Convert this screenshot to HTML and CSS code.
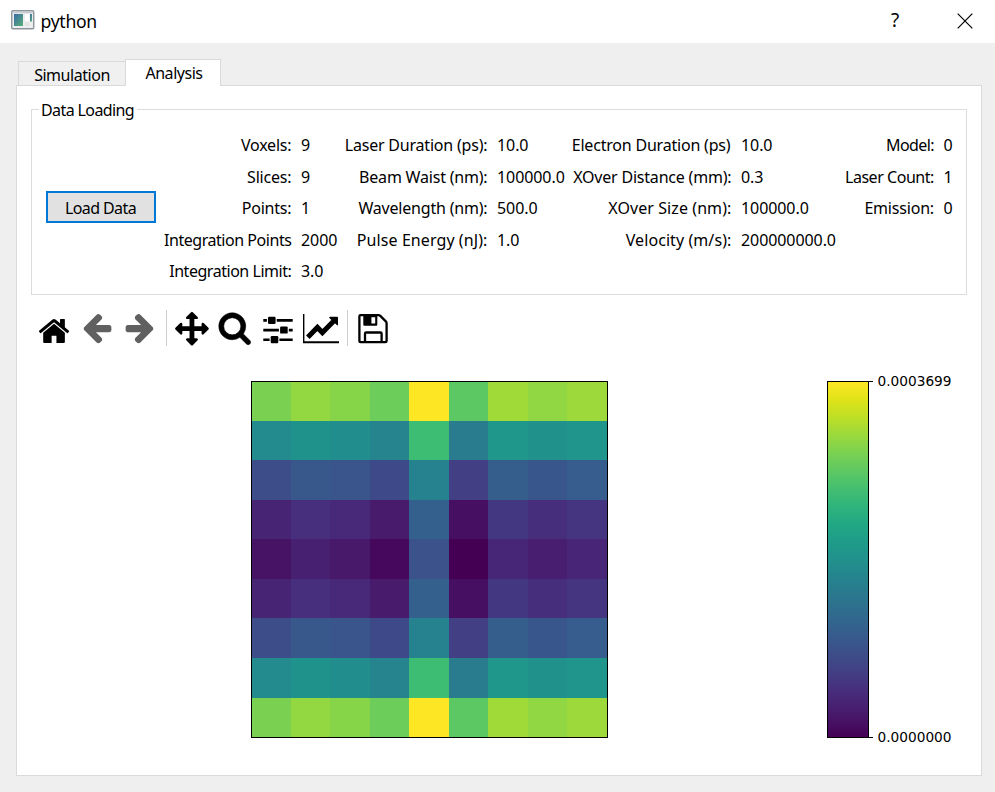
FILE: index.html
```
<!DOCTYPE html>
<html lang="en">
<head>
<meta charset="utf-8">
<title>python</title>
<link rel="stylesheet" href="styles.css">
</head>
<body>
<header class="titlebar">
  <svg class="app-icon" width="24" height="20" viewBox="0 0 24 20">
    <defs><linearGradient id="g" x1="0" y1="0" x2="1" y2="1"><stop offset="0" stop-color="#3a6aa8"/><stop offset="1" stop-color="#58b078"/></linearGradient></defs>
    <rect x=".75" y=".75" width="22" height="18" rx="1.2" fill="#eceeef" stroke="#8d949b" stroke-width="1.4"/>
    <rect x="1.5" y="1.5" width="20.5" height="1.8" fill="#c9ced4"/>
    <rect x="3" y="4" width="9" height="12" fill="url(#g)"/>
    <rect x="14" y="4" width="4.5" height="7" fill="#fff"/>
    <rect x="14" y="12.500" width="4.500" height="3.500" fill="#e0e3e0"/>
    <rect x="19" y="4" width="2" height="7.500" fill="url(#g)"/>
  </svg>
  <h1 class="title">python</h1>
  <span class="help">?</span>
  <svg class="close" width="16" height="16" viewBox="0 0 16 16"><path d="M.7.7 15.300 15.300M15.300.7.7 15.300" stroke="#000" stroke-width="1.200"/></svg>
</header>
<main class="window">
  <nav class="tabs">
    <div class="tab tight">Simulation</div>
    <div class="tab tight active">Analysis</div>
  </nav>
  <section class="pane">
    <div class="group">
      <span class="legend tighter">Data Loading</span>
      <button class="load tighter">Load Data</button>
      <dl class="col c1">
        <dt>Voxels:</dt><dd>9</dd>
        <dt>Slices:</dt><dd>9</dd>
        <dt>Points:</dt><dd>1</dd>
        <dt class="tight">Integration Points</dt><dd>2000</dd>
        <dt class="tight">Integration Limit:</dt><dd>3.0</dd>
      </dl>
      <dl class="col c2">
        <dt>Laser Duration (ps):</dt><dd>10.0</dd>
        <dt>Beam Waist (nm):</dt><dd>100000.0</dd>
        <dt>Wavelength (nm):</dt><dd>500.0</dd>
        <dt class="loose">Pulse Energy (nJ):</dt><dd>1.0</dd>
      </dl>
      <dl class="col c3">
        <dt>Electron Duration (ps)</dt><dd>10.0</dd>
        <dt>XOver Distance (mm):</dt><dd>0.3</dd>
        <dt class="loose">XOver Size (nm):</dt><dd>100000.0</dd>
        <dt class="loose">Velocity (m/s):</dt><dd>200000000.0</dd>
      </dl>
      <dl class="col c4">
        <dt class="tighter">Model:</dt><dd>0</dd>
        <dt class="tight">Laser Count:</dt><dd>1</dd>
        <dt>Emission:</dt><dd>0</dd>
      </dl>
    </div>
    <div class="toolbar">
      <svg class="tool" viewBox="0 0 36 36"><path transform="translate(1.180 4.200) scale(.0188)" d="M1472 992v480q0 26-19 45t-45 19h-384v-384h-256v384h-384q-26 0-45-19t-19-45v-480q0-1 .5-3t.5-3l575-474 575 474q1 2 1 6zm223-69l-62 74q-8 9-21 11h-3q-13 0-21-7l-692-577-692 577q-12 8-24 7-13-2-21-11l-62-74q-8-10-7-23.500t11-21.500l719-599q32-26 76-26t76 26l244 204v-195q0-14 9-23t23-9h192q14 0 23 9t9 23v408l219 182q10 8 11 21.500t-7 23.500z"/></svg>
      <svg class="tool off" viewBox="0 0 36 36"><path transform="translate(1.100 .6) scale(.0188)" d="M1664 896v128q0 53-32.500 90.500t-84.500 37.500h-704l293 294q38 36 38 90t-38 90l-75 76q-37 37-90 37-52 0-91-37l-651-652q-37-37-37-90 0-52 37-91l651-650q38-38 91-38 52 0 90 38l75 74q38 38 38 91t-38 91l-293 293h704q52 0 84.500 37.500t32.500 90.500z"/></svg>
      <svg class="tool off" viewBox="0 0 36 36"><path transform="translate(34.900 .6) scale(-.0188 .0188)" d="M1664 896v128q0 53-32.500 90.500t-84.500 37.500h-704l293 294q38 36 38 90t-38 90l-75 76q-37 37-90 37-52 0-91-37l-651-652q-37-37-37-90 0-52 37-91l651-650q38-38 91-38 52 0 90 38l75 74q38 38 38 91t-38 91l-293 293h704q52 0 84.500 37.500t32.500 90.500z"/></svg>
      <i class="sep"></i>
      <svg class="tool" viewBox="0 0 36 36"><path transform="translate(1.100 1.800) scale(.0188)" d="M1792 896q0 26-19 45l-256 256q-19 19-45 19t-45-19-19-45v-128h-384v384h128q26 0 45 19t19 45-19 45l-256 256q-19 19-45 19t-45-19l-256-256q-19-19-19-45t19-45 45-19h128v-384h-384v128q0 26-19 45t-45 19-45-19l-256-256q-19-19-19-45t19-45l256-256q19-19 45-19t45 19 19 45v128h384v-384h-128q-26 0-45-19t-19-45 19-45l256-256q19-19 45-19t45 19l256 256q19 19 19 45t-19 45-45 19h-128v384h384v-128q0-26 19-45t45-19 45 19l256 256q19 19 19 45z"/></svg>
      <svg class="tool" viewBox="0 0 36 36"><path transform="translate(.6 .4) scale(.0191)" stroke="#000" stroke-width="30" d="M1216 832q0-185-131.500-316.500t-316.500-131.500-316.500 131.500-131.500 316.500 131.500 316.500 316.500 131.500 316.500-131.500 131.500-316.500zm512 832q0 52-38 90t-90 38q-54 0-90-38l-343-342q-179 124-399 124-143 0-273.500-55.500t-225-150-150-225-55.500-273.500 55.500-273.500 150-225 225-150 273.500-55.500 273.500 55.500 225 150 150 225 55.500 273.500q0 220-124 399l343 343q37 37 37 90z"/></svg>
      <svg class="tool" viewBox="0 0 36 36"><path d="M3.300 9.100h3.600v2.600H3.300zM16.700 9.100h16v2.600h-16zM3.300 18.800h15.600v2.600H3.300zM28.800 18.800h3.900v2.600h-3.900zM3.300 28.400h6.300v2.600H3.300zM19.400 28.400h13.300v2.600H19.400z"/><rect x="8" y="6.700" width="7.600" height="7.200" rx="1.200"/><rect x="20.100" y="16.400" width="7.600" height="7.200" rx="1.200"/><rect x="10.700" y="26.100" width="7.600" height="7.200" rx="1.200"/></svg>
      <svg class="tool" viewBox="0 0 36 36"><path d="M0 4h1.400v27.200H36v2H0z"/><path d="m4.800 27.200 9.600-9.800 5 5.200L31.500 10.300" fill="none" stroke="#000" stroke-width="5"/><path d="M27 6.700h7.200q.8 0 .8.800v7.200q-.2 1.200-1.200.4L26.400 8q-.7-1 .6-1.300z"/></svg>
      <i class="sep"></i>
      <svg class="tool" viewBox="0 0 36 36"><path d="M5.500 5.100H23.500q1 0 1.800.8L30.800 11.400q.8.800.8 1.800V31q0 1.200-1.200 1.200H5.500q-1.100 0-1.100-1.200V6.300q0-1.200 1.100-1.200zM10 32V23.600q0-1.100 1.100-1.100H25.500q1.100 0 1.100 1.100V32" fill="none" stroke="#000" stroke-width="2.300"/><path fill-rule="evenodd" d="M8.300 5h14v9.700q0 1-1 1h-12q-1 0-1-1zM16.400 7.300v6.300h3.800V7.300z"/></svg>
    </div>
    <div class="figure">
      <div class="heatmap" id="heatmap"></div>
      <div class="colorbar"></div>
      <div class="ticks"><span class="tick">0.0003699</span><span class="tick">0.0000000</span></div>
    </div>
  </section>
</main>
<script src="heatmap.js"></script>
</body>
</html>
```
FILE: styles.css
```
* { box-sizing: border-box; }
body {
  margin: 0; width: 995px; height: 792px; overflow: hidden;
  background: #efefef; color: #000;
  font: 16px/20px "Noto Sans", sans-serif;
  letter-spacing: -0.2px;
  display: flex; flex-direction: column;
}
.tight { letter-spacing: -0.46px; }
.tighter { letter-spacing: -0.6px; }
.loose { letter-spacing: 0.08px; }
.titlebar { height: 43px; background: #fff; display: flex; align-items: flex-start; padding-left: 11px; }
.app-icon { margin-top: 10px; }
.title { margin: 9px 0 0 5.5px; font: 17.6px/24px "Noto Sans", sans-serif; width: 850.5px; letter-spacing: -0.3px; }
.help { font: 19px/24px "Noto Sans", sans-serif; margin-top: 8px; width: 11px; }
.close { margin: 13px 0 0 55px; }
.window { padding: 16px 13px 16px 16px; flex: 1; display: flex; flex-direction: column; }
.tabs { display: flex; align-items: flex-end; padding-left: 2px; height: 27px; margin-bottom: -1px; position: relative; }
.tab { height: 25px; width: 107px; border: 1px solid #d9d9d9; border-right: 0; background: #f0f0f0; text-align: center; line-height: 26px; }
.tab.active { height: 27px; width: 96px; background: #fff; border: 1px solid #d9d9d9; border-bottom: 0; line-height: 27px; padding-left: 2px; }
.pane { flex: 1; background: #fff; border: 1px solid #dadada; padding: 23px 14px 0 14px; }
.group { height: 186px; border: 1px solid #dcdcdc; position: relative; display: flex; padding: 20px 0 0 14px; }
.legend { position: absolute; left: 7px; top: -10px; background: #fff; padding: 0 2px; width: 98px; white-space: nowrap; }
.load { margin: 61px 0 0; width: 110px; height: 32px; border: 2px solid #0078d7; background: #e1e1e1; font: inherit; padding: 2px 1px 0 0; color: #000; }
.col { margin: 0; display: grid; grid-auto-rows: 31.5px; align-content: start; line-height: 31.500px; column-gap: 9px; white-space: nowrap; }
.col dt { text-align: right; padding-right: .6px; }
.col dd { margin: 0; letter-spacing: -0.08px; }
.c1 { grid-template-columns: 136px 36px; }
.c2 { grid-template-columns: 151px 68px; }
.c3 { grid-template-columns: 167px 95px; }
.c3 dt:first-child { padding-right: 1.6px; }
.c4 { grid-template-columns: 98.500px 10px; }
.toolbar { height: 36px; margin: 15px 0 0 5px; display: flex; gap: 7px; }
.tool { width: 36px; height: 36px; flex: none; }
.off { fill: #606060; }
.sep { width: 1px; background: #cfcfcf; margin-left: 1px; }
.figure { display: flex; margin: 35px 0 0 220px; }
.heatmap {
  width: 357px; height: 357px; border: 1px solid #000; display: grid;
  grid-template-columns: 39px 39px 40px 39px 40px 39px 40px 39px 40px;
  grid-template-rows: 39px 39px 40px 39px 40px 39px 40px 40px 39px;
}
.colorbar {
  margin-left: 219px; width: 42px; height: 357px; border: 1px solid #000;
  background: linear-gradient(to top, #440154, #481467 5%, #482475 10%, #463480 15%, #414487 20%, #3b528b 25%, #355f8d 30%, #2f6c8e 35%, #2a788e 40%, #25848e 45%, #21918c 50%, #1e9c89 55%, #22a884 60%, #2fb47c 65%, #44bf70 70%, #5ec962 75%, #7ad151 80%, #9bd93c 85%, #bddf26 90%, #dfe318 95%, #fde725);
}
.ticks { display: flex; flex-direction: column; justify-content: space-between; height: 357px; font: 13.7px/1px "DejaVu Sans", sans-serif; letter-spacing: 0; }
.tick { display: flex; height: 1px; gap: 4.5px; }
.tick::before { content: ""; width: 4px; height: 1px; background: #000; }
```
FILE: heatmap.js
```
const rows = [
  ["#7ad151","#93d741","#86d549","#6ccd5a","#fde725","#5cc863","#a0da39","#90d743","#9dd93b"],
  ["#238a8d","#1f928c","#228d8d","#25848e","#3dbc74","#287c8e","#1f988b","#21918c","#1f958b"],
  ["#3d4d8a","#38588c","#3a548c","#3e4989","#26828e","#423f85","#355e8d","#39568c","#365d8d"],
  ["#482475","#472f7d","#482979","#481b6d","#34608d","#470f62","#443781","#472e7c","#453581"],
  ["#471365","#482071","#48186a","#46085c","#3b528b","#440154","#482677","#481f70","#482576"]
];
const map = document.getElementById("heatmap");
// The profile is symmetric about its middle row.
for (const r of [0, 1, 2, 3, 4, 3, 2, 1, 0]) {
  for (const color of rows[r]) {
    const cell = document.createElement("div");
    cell.style.background = color;
    map.append(cell);
  }
}
```
